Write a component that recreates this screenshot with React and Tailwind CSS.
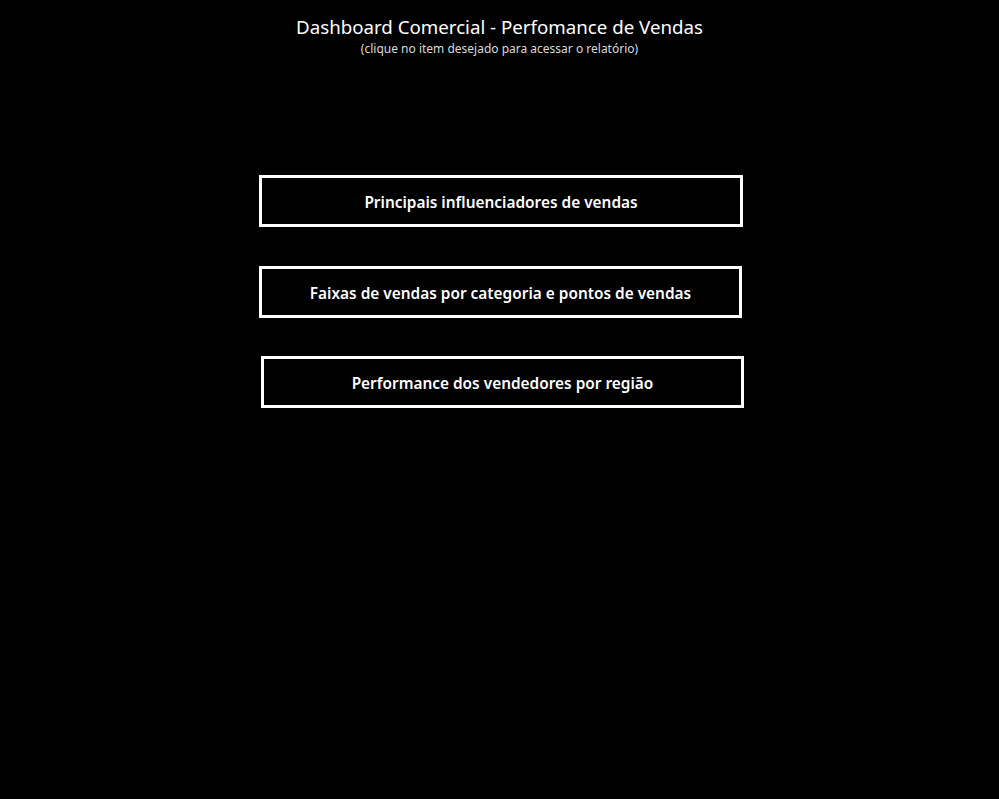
export default function App() {
  const items = [
    { label: "Principais influenciadores de vendas", cls: "ml-[259px] w-[484px] mt-0" },
    { label: "Faixas de vendas por categoria e pontos de vendas", cls: "ml-[259px] w-[483px] mt-[39px]" },
    { label: "Performance dos vendedores por região", cls: "ml-[261px] w-[483px] mt-[38px]" },
  ];
  return (
    <div className="w-[999px] h-[799px] bg-black text-white overflow-hidden" style={{ fontFamily: '"Noto Sans", "Open Sans", sans-serif' }}>
      <div className="flex flex-col items-center pt-[14px]">
        <div className="text-[18.7px] leading-[26px] text-white">Dashboard Comercial - Perfomance de Vendas</div>
        <div className="text-[12px] leading-[16px] text-[#d9d9d9] mt-[1px]">(clique no item desejado para acessar o relatório)</div>
      </div>
      <div className="flex flex-col mt-[118px]">
        {items.map((it) => (
          <div key={it.label} className={`${it.cls} h-[52px] border-[3px] border-white flex items-center justify-center pt-[3px]`}>
            <span className="text-[15.4px] font-semibold text-white">{it.label}</span>
          </div>
        ))}
      </div>
    </div>
  );
}
